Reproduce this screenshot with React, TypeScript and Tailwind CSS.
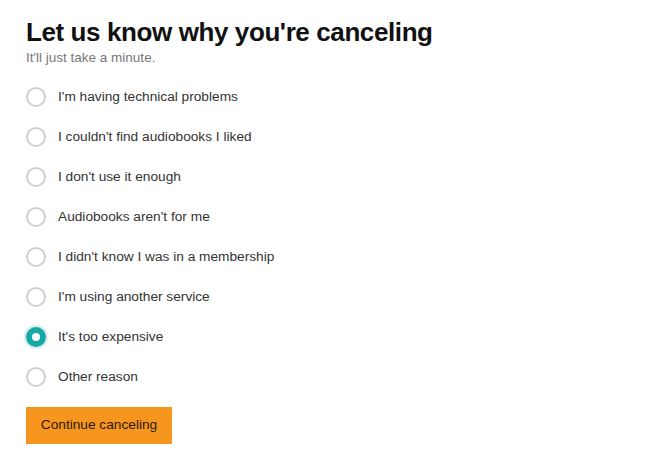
import { useState } from "react";

const reasons = [
  "I'm having technical problems",
  "I couldn't find audiobooks I liked",
  "I don't use it enough",
  "Audiobooks aren't for me",
  "I didn't know I was in a membership",
  "I'm using another service",
  "It's too expensive",
  "Other reason",
];

export default function App() {
  const [selected, setSelected] = useState(6);

  return (
    <div className="min-h-[462px] w-[670px] bg-white px-[26px] pt-4 font-['Liberation_Sans',Arial,sans-serif]">
      <h1 className="text-[26px] font-bold leading-8 tracking-[-0.4px] text-[#111]">Let us know why you're canceling</h1>
      <p className="text-[13.5px] leading-5 text-[#777]">It'll just take a minute.</p>

      {/* Reasons */}
      <div className="mt-[9px] flex flex-col">
        {reasons.map((reason, i) => {
          const checked = selected === i;
          return (
            <label key={reason} className="flex h-10 cursor-pointer items-center gap-3" onClick={() => setSelected(i)}>
              {checked ? (
                <span className="flex h-5 w-5 shrink-0 items-center justify-center rounded-full bg-[#14a9a5] ring-2 ring-[#d9ecec]">
                  <span className="h-2 w-2 rounded-full bg-white" />
                </span>
              ) : (
                <span className="h-5 w-5 shrink-0 rounded-full border-2 border-[#cfcfcf] bg-white" />
              )}
              <span className="text-[13.7px] text-[#333]">{reason}</span>
            </label>
          );
        })}
      </div>

      <button className="mt-[10px] h-[37px] w-[146px] bg-[#f7961f] text-[13.7px] text-[#2a1805]">
        Continue canceling
      </button>
    </div>
  );
}
